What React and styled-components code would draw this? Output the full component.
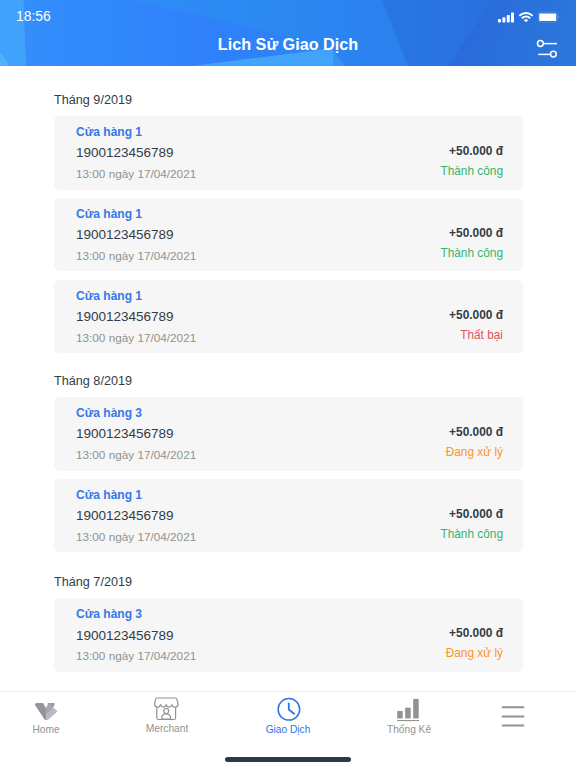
import styled, { createGlobalStyle } from 'styled-components';

const GlobalStyle = createGlobalStyle`
    * {
        box-sizing: border-box;
    }

    body {
        margin: 0;
        background-color: #fff;
        font-family: "Liberation Sans", Arial, sans-serif;
    }
`

const Screen = styled.div`
    width: 576px;
    height: 768px;
    display: flex;
    flex-flow: column nowrap;
    overflow: hidden;
    background-color: #fff;
`

const Header = styled.header`
    position: relative;
    z-index: 0;
    height: 66px;
    flex-shrink: 0;
    display: flex;
    flex-flow: column nowrap;
    color: white;

    .header-bg {
        position: absolute;
        top: 0;
        left: 0;
        width: 100%;
        height: 100%;
        z-index: -1;
    }
`

const StatusBar = styled.div`
    height: 32px;
    padding: 0 16px 0 16px;
    display: flex;
    align-items: center;
    justify-content: space-between;

    .time {
        font-size: 13.9px;
        line-height: 16px;
    }

    svg {
        display: block;
        margin-top: 2px;
    }
`

const TitleBar = styled.div`
    display: grid;
    grid-template-columns: 40px 1fr 40px;
    height: 34px;

    h1 {
        grid-column: 2;
        margin: 2px 0 0;
        font-size: 16.2px;
        line-height: 20px;
        font-weight: bold;
        text-align: center;
    }

    svg {
        margin: 7px 0 0 0;
    }
`

const Content = styled.main`
    flex: 1;
    padding: 0 53px 0 54px;
`

const Month = styled.section`
    padding-top: ${props => props.$top}px;

    h2 {
        margin: 0 0 8.5px;
        font-size: 12.65px;
        line-height: 16px;
        font-weight: normal;
        color: #333c47;
    }
`

const Card = styled.article`
    height: 73.5px;
    margin-bottom: 8.3px;
    padding: 0 20px 0 22px;
    border-radius: 5px;
    background-color: #f6f6f6;
    display: flex;
    justify-content: space-between;

    &:last-child {
        margin-bottom: 0;
    }
`

const Info = styled.div`
    padding-top: 8px;
    display: flex;
    flex-flow: column nowrap;
`

const Store = styled.span`
    font-size: 12px;
    line-height: 16px;
    font-weight: bold;
    color: #3379ea;
`

const Code = styled.span`
    margin-top: 5.3px;
    font-size: 13.5px;
    line-height: 16px;
    color: #333c47;
`

const Time = styled.span`
    margin-top: 4.7px;
    font-size: 11.75px;
    line-height: 16px;
    color: #929292;
`

const Result = styled.div`
    padding-top: 27px;
    display: flex;
    flex-flow: column nowrap;
    align-items: flex-end;
`

const Amount = styled.span`
    font-size: 11.9px;
    line-height: 16px;
    font-weight: bold;
    color: #333c47;
`

const statusColors = {
    success: '#32b56f',
    failed: '#e05260',
    pending: '#f7962c'
}

const Status = styled.span`
    margin-top: 4px;
    font-size: 11.85px;
    line-height: 16px;
    color: ${props => statusColors[props.$type]};
`

const TabBar = styled.nav`
    height: 77px;
    flex-shrink: 0;
    border-top: 1px solid #ededed;
    display: flex;
    flex-flow: column nowrap;
    align-items: center;
`

const Tabs = styled.div`
    width: 100%;
    height: 64.5px;
    display: grid;
    grid-template-columns: 92px 150px 92px 150px 58px;
    justify-content: start;
`

const Tab = styled.a`
    display: flex;
    flex-flow: column nowrap;
    align-items: center;
    font-size: 10.2px;
    line-height: 12px;
    color: ${props => props.$active ? '#2f74e8' : '#929292'};

    svg {
        display: block;
        flex-shrink: 0;
    }

    span {
        white-space: nowrap;
        margin-top: ${props => props.$raised ? -1 : 0}px;
    }
`

const HomeIndicator = styled.div`
    width: 126px;
    height: 5px;
    flex-shrink: 0;
    border-radius: 3px;
    background-color: #303844;
`

const months = [
    {
        name: 'Tháng 9/2019',
        top: 25.5,
        items: [
            { store: 'Cửa hàng 1', type: 'success', status: 'Thành công' },
            { store: 'Cửa hàng 1', type: 'success', status: 'Thành công' },
            { store: 'Cửa hàng 1', type: 'failed', status: 'Thất bại' }
        ]
    },
    {
        name: 'Tháng 8/2019',
        top: 19.5,
        items: [
            { store: 'Cửa hàng 3', type: 'pending', status: 'Đang xử lý' },
            { store: 'Cửa hàng 1', type: 'success', status: 'Thành công' }
        ]
    },
    {
        name: 'Tháng 7/2019',
        top: 21.4,
        items: [
            { store: 'Cửa hàng 3', type: 'pending', status: 'Đang xử lý' }
        ]
    }
]

function HeaderBackground () {
    return(
        <svg className="header-bg" viewBox="0 0 576 66" preserveAspectRatio="none">
            <defs>
                <linearGradient id="base" x1="0" x2="1" y1="0" y2="0">
                    <stop offset="0" stopColor="#358ffb" />
                    <stop offset=".18" stopColor="#3189fb" />
                    <stop offset=".36" stopColor="#2f80fa" />
                    <stop offset=".55" stopColor="#2d84f3" />
                    <stop offset="1" stopColor="#2a77df" />
                </linearGradient>
                <linearGradient id="top" gradientUnits="userSpaceOnUse" x1="130" x2="390" y1="0" y2="0">
                    <stop offset="0" stopColor="#308cf8" />
                    <stop offset=".5" stopColor="#2c89f2" />
                    <stop offset="1" stopColor="#2b81ee" />
                </linearGradient>
                <linearGradient id="right" gradientUnits="userSpaceOnUse" x1="382" x2="576" y1="0" y2="0">
                    <stop offset="0" stopColor="#2876e6" />
                    <stop offset=".5" stopColor="#2971df" />
                    <stop offset="1" stopColor="#2a74dc" />
                </linearGradient>
                <linearGradient id="corner" gradientUnits="userSpaceOnUse" x1="485" x2="576" y1="0" y2="40">
                    <stop offset="0" stopColor="#2a66d8" />
                    <stop offset="1" stopColor="#2b7adb" />
                </linearGradient>
            </defs>
            <rect width="576" height="66" fill="url(#base)" />
            <path d="M0 0H23.5L26 66H0Z" fill="#41a2fb" />
            <path d="M0 53Q6 58 9 66H0Z" fill="#54b0fc" />
            <path d="M130 0H382L408 66H345L333 50L285 36L192 14Z" fill="url(#top)" />
            <path d="M192 66L318 50L333 48V66Z" fill="#41a3fb" />
            <path d="M333 50L345 66H333Z" fill="#3593f4" />
            <path d="M382 0H576V66H408Z" fill="url(#right)" />
            <path d="M492 0H576V66H448L470 33Z" fill="url(#corner)" opacity=".55" />
        </svg>
    )
}

function StatusIcons () {
    return(
        <svg width="62" height="12" viewBox="0 0 62 12" fill="white">
            <rect x="0" y="8" width="3" height="3.5" rx=".7" />
            <rect x="4.4" y="6.2" width="3" height="5.3" rx=".7" />
            <rect x="8.8" y="4" width="3" height="7.5" rx=".7" />
            <rect x="13" y="1.4" width="3" height="10.1" rx=".7" />
            <g fill="none" stroke="white" strokeWidth="2">
                <path d="M21.3 4.7Q28 -.8 34.7 4.7" />
                <path d="M23.8 7.3Q28 3.8 32.2 7.3" />
            </g>
            <path d="M25.6 9Q28 7.3 30.4 9L28 11.3Z" />
            <rect x="40.2" y="1" width="19" height="10.2" rx="2.6" fill="none" stroke="white" strokeWidth=".8" opacity=".2" />
            <rect x="41.2" y="2.6" width="17" height="7.4" rx="1" />
            <path d="M60.2 4.5Q61.8 6 60.2 7.7Z" opacity=".4" />
        </svg>
    )
}

function FilterIcon () {
    return(
        <svg width="22" height="20" viewBox="0 0 22 20" fill="none" stroke="white" strokeWidth="1.5">
            <circle cx="4.4" cy="4.5" r="2.9" />
            <path d="M7.3 4.6H21" />
            <circle cx="17.4" cy="15.1" r="2.9" />
            <path d="M2.2 15.4H14.5" />
        </svg>
    )
}

function HomeIcon () {
    return(
        <svg width="24" height="32" viewBox="0 0 24 32">
            <path d="M1 13Q.6 11 2.6 11H9L12.5 17L13 28Q11.5 28.6 10.2 27Z" fill="#929599" />
            <path d="M14 11H20Q21.2 11 20.6 12.4L19.5 15L13 15Z" fill="#9b9ea2" />
            <path d="M12.3 15L15 12.5L23 18.6Q23.6 19.3 22.8 20L14.4 27.5Q13.5 28.3 12 28Z" fill="#b8bbbf" />
            <path d="M12.3 15L15 12.5L19.5 16L12.3 22Z" fill="#a4a7ab" />
        </svg>
    )
}

function MerchantIcon () {
    return(
        <svg width="26" height="32" viewBox="0.8 0.7 26 32" fill="none" stroke="#929292" strokeWidth="1.2" strokeLinejoin="round">
            <path d="M4 6.7H22Q23.4 6.7 23.7 8L25 13.2Q24 16 21.8 16Q19.3 16 18.7 13.4Q18 15.8 15.8 15.8Q13.6 15.8 13 13.4Q12.4 15.8 10.2 15.8Q8 15.8 7.3 13.4Q6.7 16 4.2 16Q2 16 1.4 13.2L2.3 8Q2.6 6.7 4 6.7Z" />
            <path d="M3.6 16.5V26.4Q3.6 28.2 5.4 28.2H20.6Q22.4 28.2 22.4 26.4V16.5" />
            <circle cx="13" cy="19.7" r="2.5" />
            <path d="M8.5 27.8Q8.3 22.6 13 22.6Q17.7 22.6 17.5 27.8Z" />
        </svg>
    )
}

function ClockIcon () {
    return(
        <svg width="26" height="32" viewBox="0 0 26 32" fill="none" stroke="#2f74e8" strokeWidth="1.5">
            <circle cx="13.9" cy="17.3" r="10.8" />
            <path d="M13.8 10.8V17.5L19.7 22.3" strokeWidth="1.8" />
        </svg>
    )
}

function ChartIcon () {
    return(
        <svg width="24" height="32" viewBox="0.8 0 24 32" fill="#929292">
            <rect x="1" y="19" width="5.5" height="7.4" />
            <rect x="9" y="15.7" width="5.5" height="10.7" />
            <rect x="17" y="7" width="5.5" height="19.4" />
            <rect x="1" y="28" width="22" height="1.1" />
        </svg>
    )
}

function MenuIcon () {
    return(
        <svg width="24" height="36" viewBox="0 0 24 36" stroke="#929292" strokeWidth="2">
            <path d="M.8 15.2H23.2M.8 24.4H23.2M.8 33.5H23.2" />
        </svg>
    )
}

function App () {
    return(
        <Screen>
            <GlobalStyle />
            <Header>
                <HeaderBackground />
                <StatusBar>
                    <span className="time">18:56</span>
                    <StatusIcons />
                </StatusBar>
                <TitleBar>
                    <h1>Lich Sử Giao Dịch</h1>
                    <FilterIcon />
                </TitleBar>
            </Header>
            <Content>
                {months.map(month => (
                    <Month key={month.name} $top={month.top}>
                        <h2>{month.name}</h2>
                        {month.items.map((item, index) => (
                            <Card key={index}>
                                <Info>
                                    <Store>{item.store}</Store>
                                    <Code>1900123456789</Code>
                                    <Time>13:00 ngày 17/04/2021</Time>
                                </Info>
                                <Result>
                                    <Amount>+50.000 đ</Amount>
                                    <Status $type={item.type}>{item.status}</Status>
                                </Result>
                            </Card>
                        ))}
                    </Month>
                ))}
            </Content>
            <TabBar>
                <Tabs>
                    <Tab>
                        <HomeIcon />
                        <span>Home</span>
                    </Tab>
                    <Tab $raised>
                        <MerchantIcon />
                        <span>Merchant</span>
                    </Tab>
                    <Tab $active>
                        <ClockIcon />
                        <span>Giao Dịch</span>
                    </Tab>
                    <Tab>
                        <ChartIcon />
                        <span>Thống Kê</span>
                    </Tab>
                    <Tab>
                        <MenuIcon />
                    </Tab>
                </Tabs>
                <HomeIndicator />
            </TabBar>
        </Screen>
    )
}

export default App;
